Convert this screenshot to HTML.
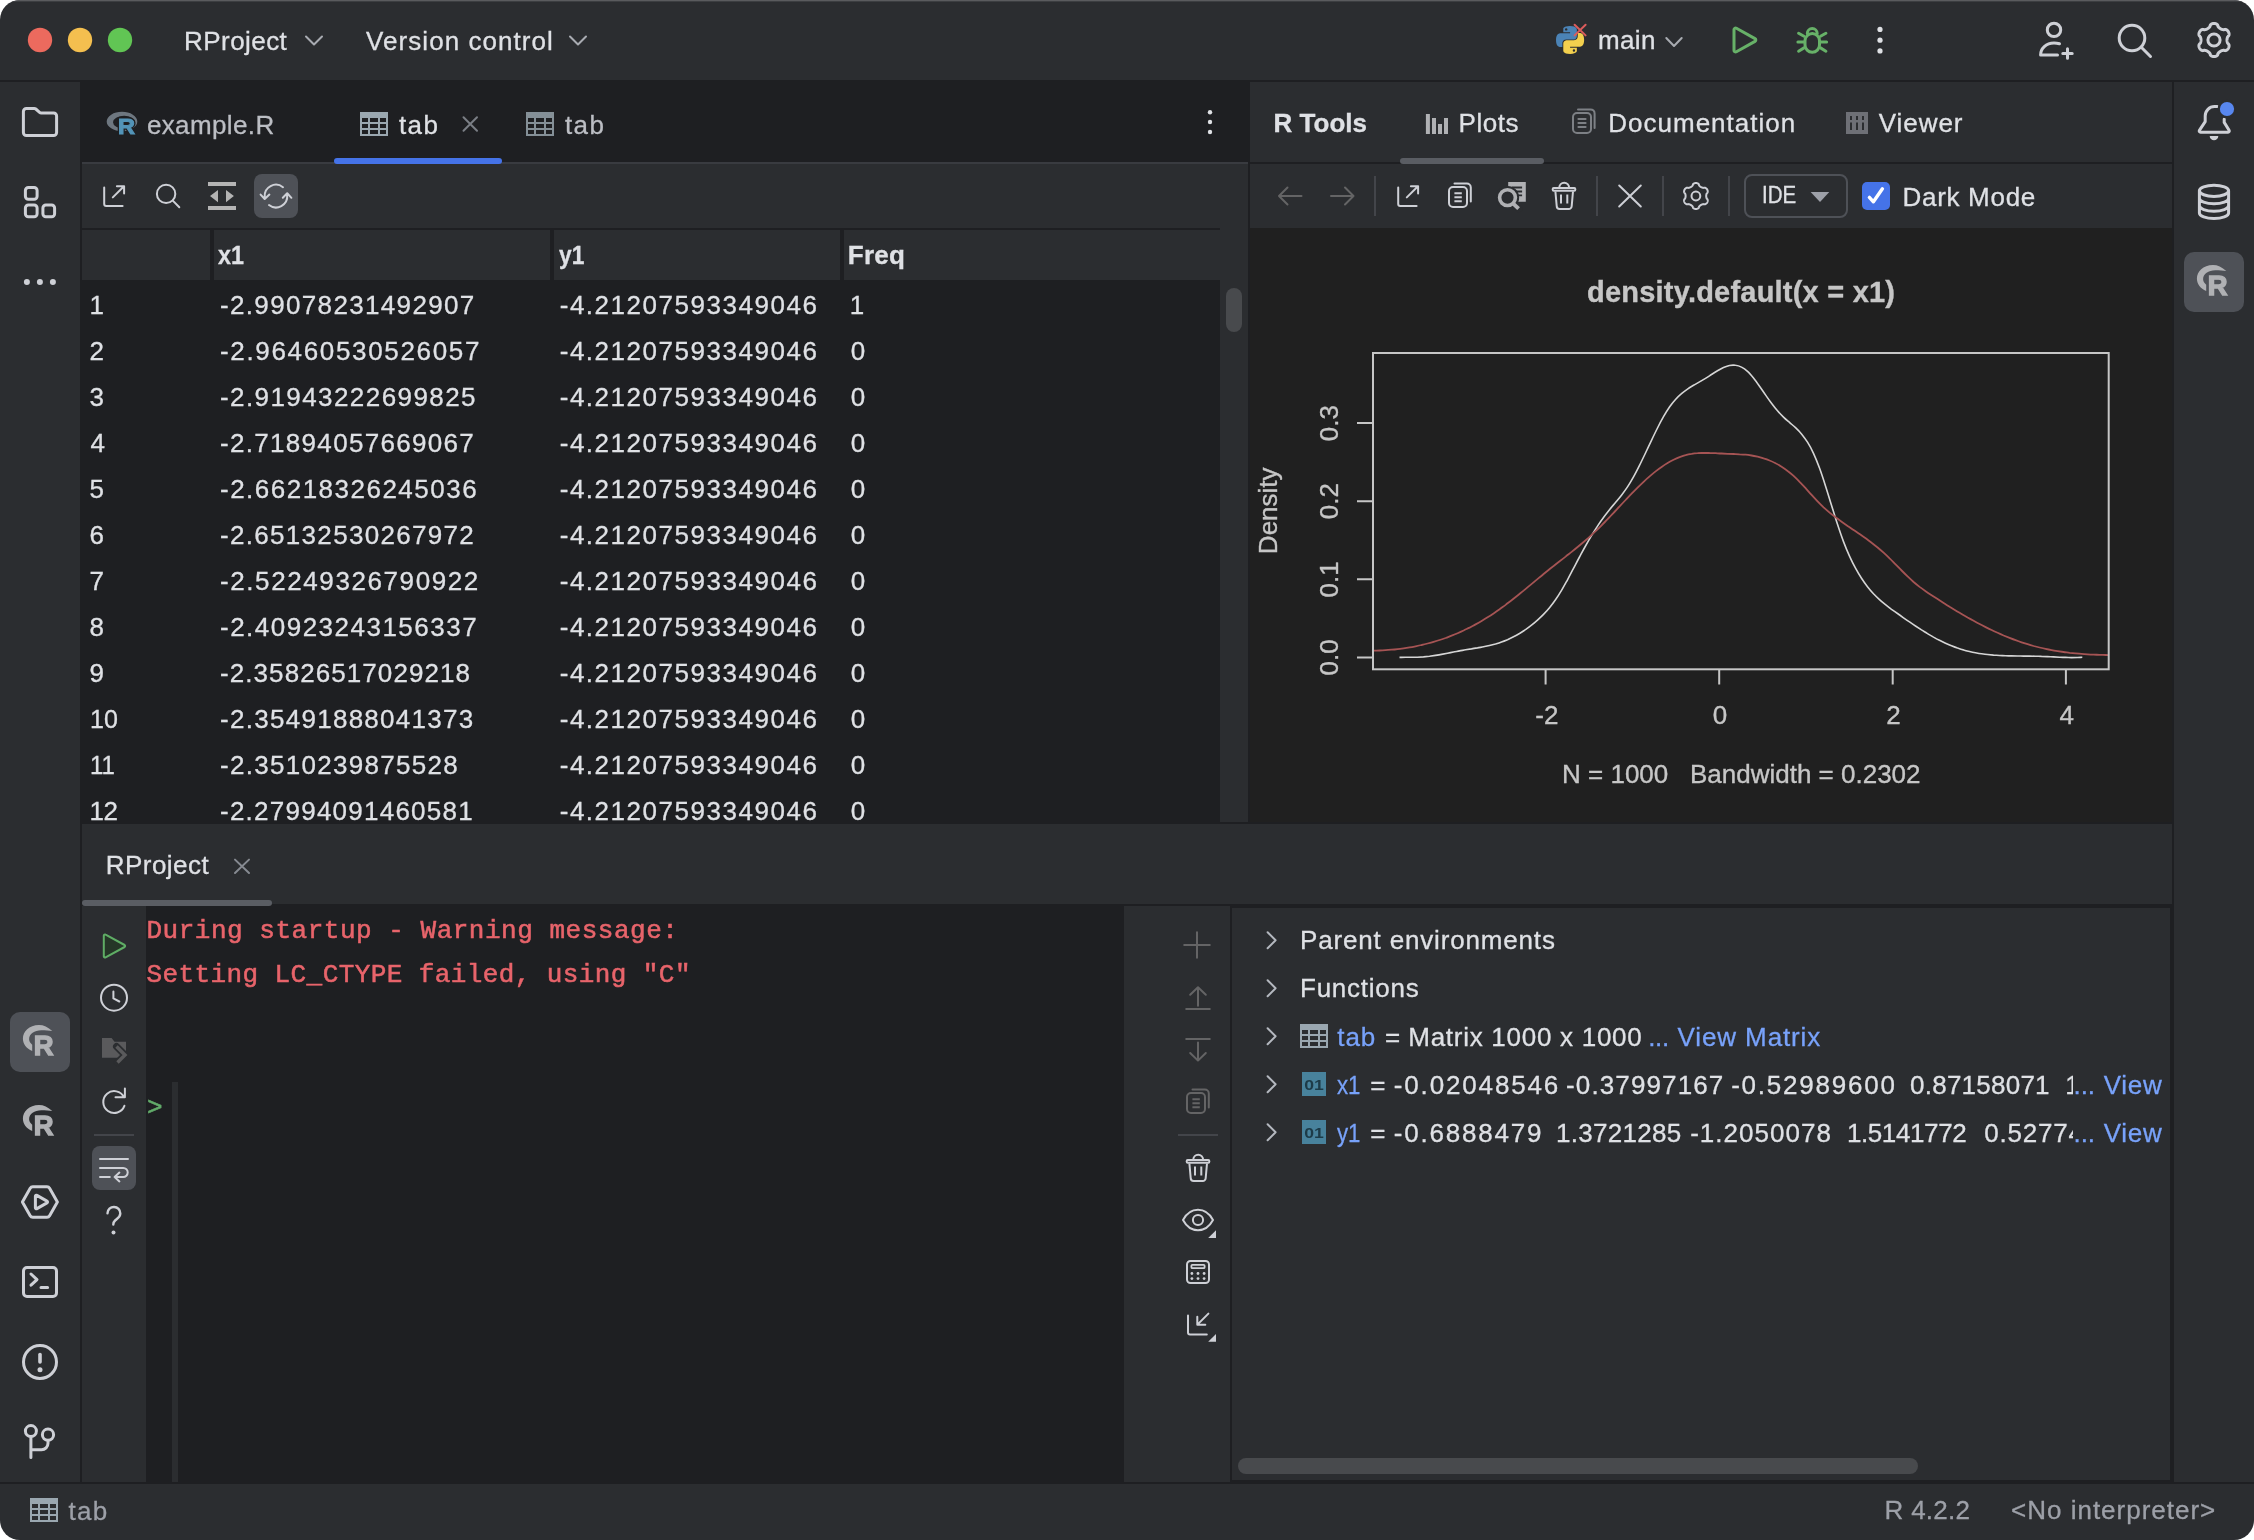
<!DOCTYPE html>
<html><head><meta charset='utf-8'><title>RProject</title><style>html,body{margin:0;padding:0;background:#fff}
#app{position:relative;width:2254px;height:1540px;overflow:hidden;border-radius:20px;background:#2b2d30;font-family:'Liberation Sans',sans-serif;font-size:26px;color:#dfe1e5}
#app div,#app span,#app svg{position:absolute;display:block}
#app span{white-space:pre;line-height:1;-webkit-text-stroke:0.3px}
#app .gl{left:0;top:0;width:2254px;height:1540px;will-change:transform}
#app svg{overflow:visible}</style></head><body><div id='app'><div class='gl'>
<div style="left:0px;top:0px;width:2254px;height:1px;background:#5a5b5e;"></div>
<div style="left:0px;top:1px;width:2254px;height:1px;background:#3c3e41;"></div>
<div style="left:0px;top:80px;width:2254px;height:2px;background:#1e1f22;"></div>
<div style="left:80px;top:82px;width:2px;height:1400px;background:#1e1f22;"></div>
<div style="left:2172px;top:82px;width:2px;height:1400px;background:#1e1f22;"></div>
<div style="left:82px;top:82px;width:1166px;height:80px;background:#1e1f22;"></div>
<div style="left:82px;top:162px;width:1166px;height:2px;background:#393b40;"></div>
<div style="left:334px;top:158px;width:168px;height:6px;background:#4573e8;border-radius:3px"></div>
<div style="left:82px;top:228px;width:1138px;height:2px;background:#1e1f22;"></div>
<div style="left:254px;top:174px;width:44px;height:44px;background:#4e5157;border-radius:8px"></div>
<div style="left:210px;top:230px;width:4px;height:50px;background:#1e1f22;"></div>
<div style="left:550px;top:230px;width:4px;height:50px;background:#1e1f22;"></div>
<div style="left:840px;top:230px;width:4px;height:50px;background:#1e1f22;"></div>
<div style="left:82px;top:280px;width:1138px;height:544px;background:#1e1f22;"></div>
<div style="left:1226px;top:288px;width:16px;height:44px;background:#484a4d;border-radius:8px"></div>
<div style="left:1248px;top:82px;width:2px;height:742px;background:#1e1f22;"></div>
<div style="left:1250px;top:162px;width:922px;height:2px;background:#1e1f22;"></div>
<div style="left:1400px;top:158px;width:144px;height:6px;background:#5a5d63;border-radius:3px"></div>
<div style="left:1250px;top:228px;width:922px;height:594px;background:#202020;"></div>
<div style="left:82px;top:822px;width:2090px;height:2px;background:#1e1f22;"></div>
<div style="left:82px;top:904px;width:2090px;height:2px;background:#1e1f22;"></div>
<div style="left:82px;top:900px;width:190px;height:6px;background:#5a5d63;border-radius:3px"></div>
<div style="left:146px;top:906px;width:978px;height:576px;background:#1e1f22;"></div>
<div style="left:172px;top:1082px;width:6px;height:400px;background:#2b2d30;"></div>
<div style="left:1230px;top:906px;width:2px;height:576px;background:#1e1f22;"></div>
<div style="left:1232px;top:906px;width:938px;height:2px;background:#1e1f22;"></div>
<div style="left:2170px;top:906px;width:2px;height:576px;background:#1e1f22;"></div>
<div style="left:1238px;top:1458px;width:680px;height:16px;background:#484a4d;border-radius:8px"></div>
<div style="left:94px;top:1134px;width:40px;height:2px;background:#43454a;"></div>
<div style="left:92px;top:1146px;width:44px;height:44px;background:#4e5157;border-radius:8px"></div>
<div style="left:1178px;top:1134px;width:40px;height:2px;background:#43454a;"></div>
<div style="left:0px;top:1482px;width:2254px;height:2px;background:#1e1f22;"></div>
<div style="left:1232px;top:1480px;width:938px;height:2px;background:#1e1f22;"></div>
<div style="left:10px;top:1012px;width:60px;height:60px;background:#4e5157;border-radius:10px"></div>
<div style="left:2184px;top:252px;width:60px;height:60px;background:#4e5157;border-radius:10px"></div>
<div style="left:1374px;top:176px;width:2px;height:40px;background:#43454a;"></div>
<div style="left:1596px;top:176px;width:2px;height:40px;background:#43454a;"></div>
<div style="left:1662px;top:176px;width:2px;height:40px;background:#43454a;"></div>
<div style="left:1728px;top:176px;width:2px;height:40px;background:#43454a;"></div>
<div style="left:1744px;top:173.8px;width:104px;height:44.4px;background:transparent;border:2px solid #4e5157;border-radius:8px;box-sizing:border-box"></div>
<div style="left:1862px;top:182px;width:28px;height:28px;background:#4573e8;border-radius:5px"></div>
<span style="left:184.1px;top:28.09px;font-size:26px;color:#dfe1e5;letter-spacing:0.429px;">RProject</span>
<span style="left:366.1px;top:28.09px;font-size:26px;color:#dfe1e5;letter-spacing:1.05px;">Version control</span>
<span style="left:1598.0px;top:27.29px;font-size:26px;color:#dfe1e5;letter-spacing:0.333px;">main</span>
<span style="left:146.9px;top:111.59px;font-size:26px;color:#bcbec4;letter-spacing:0.387px;">example.R</span>
<span style="left:399.0px;top:111.59px;font-size:26px;color:#dfe1e5;letter-spacing:1.35px;">tab</span>
<span style="left:565.0px;top:111.59px;font-size:26px;color:#bcbec4;letter-spacing:1.35px;">tab</span>
<span style="left:218.4px;top:241.59px;font-size:26px;color:#dfe1e5;font-weight:700;transform:scaleX(0.8966);transform-origin:0 0;">x1</span>
<span style="left:558.7px;top:241.59px;font-size:26px;color:#dfe1e5;font-weight:700;transform:scaleX(0.8759);transform-origin:0 0;">y1</span>
<span style="left:847.8px;top:241.59px;font-size:26px;color:#dfe1e5;font-weight:700;letter-spacing:0.267px;">Freq</span>
<span style="left:89.6px;top:291.59px;font-size:26px;color:#dfe1e5;">1</span>
<span style="left:220.0px;top:291.59px;font-size:26px;color:#dfe1e5;letter-spacing:1.344px;">-2.99078231492907</span>
<span style="left:559.7px;top:291.59px;font-size:26px;color:#dfe1e5;letter-spacing:1.531px;">-4.21207593349046</span>
<span style="left:849.7px;top:291.59px;font-size:26px;color:#dfe1e5;">1</span>
<span style="left:89.6px;top:337.59px;font-size:26px;color:#dfe1e5;">2</span>
<span style="left:220.0px;top:337.59px;font-size:26px;color:#dfe1e5;letter-spacing:1.663px;">-2.96460530526057</span>
<span style="left:559.7px;top:337.59px;font-size:26px;color:#dfe1e5;letter-spacing:1.531px;">-4.21207593349046</span>
<span style="left:850.7px;top:337.59px;font-size:26px;color:#dfe1e5;">0</span>
<span style="left:89.6px;top:383.59px;font-size:26px;color:#dfe1e5;">3</span>
<span style="left:220.0px;top:383.59px;font-size:26px;color:#dfe1e5;letter-spacing:1.419px;">-2.91943222699825</span>
<span style="left:559.7px;top:383.59px;font-size:26px;color:#dfe1e5;letter-spacing:1.531px;">-4.21207593349046</span>
<span style="left:850.7px;top:383.59px;font-size:26px;color:#dfe1e5;">0</span>
<span style="left:90.6px;top:429.59px;font-size:26px;color:#dfe1e5;">4</span>
<span style="left:220.0px;top:429.59px;font-size:26px;color:#dfe1e5;letter-spacing:1.312px;">-2.71894057669067</span>
<span style="left:559.7px;top:429.59px;font-size:26px;color:#dfe1e5;letter-spacing:1.531px;">-4.21207593349046</span>
<span style="left:850.7px;top:429.59px;font-size:26px;color:#dfe1e5;">0</span>
<span style="left:89.6px;top:475.59px;font-size:26px;color:#dfe1e5;">5</span>
<span style="left:220.0px;top:475.59px;font-size:26px;color:#dfe1e5;letter-spacing:1.488px;">-2.66218326245036</span>
<span style="left:559.7px;top:475.59px;font-size:26px;color:#dfe1e5;letter-spacing:1.531px;">-4.21207593349046</span>
<span style="left:850.7px;top:475.59px;font-size:26px;color:#dfe1e5;">0</span>
<span style="left:89.6px;top:521.59px;font-size:26px;color:#dfe1e5;">6</span>
<span style="left:220.0px;top:521.59px;font-size:26px;color:#dfe1e5;letter-spacing:1.312px;">-2.65132530267972</span>
<span style="left:559.7px;top:521.59px;font-size:26px;color:#dfe1e5;letter-spacing:1.531px;">-4.21207593349046</span>
<span style="left:850.7px;top:521.59px;font-size:26px;color:#dfe1e5;">0</span>
<span style="left:89.6px;top:567.59px;font-size:26px;color:#dfe1e5;">7</span>
<span style="left:220.0px;top:567.59px;font-size:26px;color:#dfe1e5;letter-spacing:1.594px;">-2.52249326790922</span>
<span style="left:559.7px;top:567.59px;font-size:26px;color:#dfe1e5;letter-spacing:1.531px;">-4.21207593349046</span>
<span style="left:850.7px;top:567.59px;font-size:26px;color:#dfe1e5;">0</span>
<span style="left:89.6px;top:613.59px;font-size:26px;color:#dfe1e5;">8</span>
<span style="left:220.0px;top:613.59px;font-size:26px;color:#dfe1e5;letter-spacing:1.488px;">-2.40923243156337</span>
<span style="left:559.7px;top:613.59px;font-size:26px;color:#dfe1e5;letter-spacing:1.531px;">-4.21207593349046</span>
<span style="left:850.7px;top:613.59px;font-size:26px;color:#dfe1e5;">0</span>
<span style="left:89.6px;top:659.59px;font-size:26px;color:#dfe1e5;">9</span>
<span style="left:220.0px;top:659.59px;font-size:26px;color:#dfe1e5;letter-spacing:1.075px;">-2.35826517029218</span>
<span style="left:559.7px;top:659.59px;font-size:26px;color:#dfe1e5;letter-spacing:1.531px;">-4.21207593349046</span>
<span style="left:850.7px;top:659.59px;font-size:26px;color:#dfe1e5;">0</span>
<span style="left:89.64px;top:705.59px;font-size:26px;color:#dfe1e5;transform:scaleX(0.9643);transform-origin:0 0;">10</span>
<span style="left:220.0px;top:705.59px;font-size:26px;color:#dfe1e5;letter-spacing:1.281px;">-2.35491888041373</span>
<span style="left:559.7px;top:705.59px;font-size:26px;color:#dfe1e5;letter-spacing:1.531px;">-4.21207593349046</span>
<span style="left:850.7px;top:705.59px;font-size:26px;color:#dfe1e5;">0</span>
<span style="left:89.68px;top:751.59px;font-size:26px;color:#dfe1e5;transform:scaleX(0.924);transform-origin:0 0;">11</span>
<span style="left:220.0px;top:751.59px;font-size:26px;color:#dfe1e5;letter-spacing:1.3px;">-2.3510239875528</span>
<span style="left:559.7px;top:751.59px;font-size:26px;color:#dfe1e5;letter-spacing:1.531px;">-4.21207593349046</span>
<span style="left:850.7px;top:751.59px;font-size:26px;color:#dfe1e5;">0</span>
<span style="left:89.6px;top:797.59px;font-size:26px;color:#dfe1e5;letter-spacing:-0.6px;">12</span>
<span style="left:220.0px;top:797.59px;font-size:26px;color:#dfe1e5;letter-spacing:1.244px;">-2.27994091460581</span>
<span style="left:559.7px;top:797.59px;font-size:26px;color:#dfe1e5;letter-spacing:1.531px;">-4.21207593349046</span>
<span style="left:850.7px;top:797.59px;font-size:26px;color:#dfe1e5;">0</span>
<span style="left:1273.5px;top:109.59px;font-size:26px;color:#dfe1e5;font-weight:700;letter-spacing:0.017px;">R Tools</span>
<span style="left:1458.5px;top:109.59px;font-size:26px;color:#dfe1e5;letter-spacing:0.575px;">Plots</span>
<span style="left:1608.3px;top:109.59px;font-size:26px;color:#dfe1e5;letter-spacing:1.0px;">Documentation</span>
<span style="left:1878.8px;top:109.59px;font-size:26px;color:#dfe1e5;letter-spacing:0.94px;">Viewer</span>
<span style="left:1762.31px;top:184.23px;font-size:23px;color:#dfe1e5;transform:scaleX(0.8919);transform-origin:0 0;">IDE</span>
<span style="left:1902.5px;top:183.59px;font-size:26px;color:#dfe1e5;letter-spacing:0.7px;">Dark Mode</span>
<span style="left:105.8px;top:851.59px;font-size:26px;color:#dfe1e5;letter-spacing:0.457px;">RProject</span>
<span style="left:146.5px;top:917.67px;font-size:26px;color:#e8646b;font-family:'Liberation Mono',monospace;-webkit-text-stroke:0.55px;letter-spacing:0.516px;">During startup - Warning message:</span>
<span style="left:146.5px;top:961.67px;font-size:26px;color:#e8646b;font-family:'Liberation Mono',monospace;-webkit-text-stroke:0.55px;letter-spacing:0.409px;">Setting LC_CTYPE failed, using "C"</span>
<span style="left:147.0px;top:1095.27px;font-size:26px;color:#62ac6a;font-family:'Liberation Mono',monospace;-webkit-text-stroke:0.55px;">&gt;</span>
<span style="left:1300.0px;top:927.19px;font-size:26px;color:#dfe1e5;letter-spacing:0.833px;">Parent environments</span>
<span style="left:1300.0px;top:975.29px;font-size:26px;color:#dfe1e5;letter-spacing:0.75px;">Functions</span>
<span style="left:1337.2px;top:1023.59px;font-size:26px;color:#78a2fa;letter-spacing:1.0px;">tab</span>
<span style="left:1385.1px;top:1023.59px;font-size:26px;color:#dfe1e5;">=</span>
<span style="left:1408.3px;top:1023.59px;font-size:26px;color:#dfe1e5;letter-spacing:0.724px;">Matrix 1000 x 1000</span>
<span style="left:1648.2px;top:1023.59px;font-size:26px;color:#78a2fa;letter-spacing:-0.3px;">...</span>
<span style="left:1677.6px;top:1023.59px;font-size:26px;color:#78a2fa;letter-spacing:0.88px;">View Matrix</span>
<span style="left:1337.2px;top:1071.59px;font-size:26px;color:#78a2fa;transform:scaleX(0.8556);transform-origin:0 0;">x1</span>
<span style="left:1370.2px;top:1071.59px;font-size:26px;color:#dfe1e5;">=</span>
<span style="left:1337.2px;top:1119.59px;font-size:26px;color:#78a2fa;transform:scaleX(0.8556);transform-origin:0 0;">y1</span>
<span style="left:1370.2px;top:1119.59px;font-size:26px;color:#dfe1e5;">=</span>
<span style="left:68.6px;top:1497.59px;font-size:26px;color:#9da0a8;letter-spacing:1.25px;">tab</span>
<span style="left:1884.6px;top:1497.19px;font-size:26px;color:#9da0a8;letter-spacing:0.267px;">R 4.2.2</span>
<span style="left:2011.1px;top:1497.19px;font-size:26px;color:#9da0a8;letter-spacing:0.987px;">&lt;No interpreter&gt;</span>
<span style="left:1393.8px;top:1071.59px;font-size:26px;color:#dfe1e5;letter-spacing:1.85px;">-0.02048546</span>
<span style="left:1566.0px;top:1071.59px;font-size:26px;color:#dfe1e5;letter-spacing:1.13px;">-0.37997167</span>
<span style="left:1731.2px;top:1071.59px;font-size:26px;color:#dfe1e5;letter-spacing:1.77px;">-0.52989600</span>
<span style="left:1910.0px;top:1071.59px;font-size:26px;color:#dfe1e5;letter-spacing:0.244px;">0.87158071</span>
<span style="left:2065.3px;top:1071.59px;font-size:26px;color:#dfe1e5;letter-spacing:1.3px;">1.27</span>
<span style="left:1393.8px;top:1119.59px;font-size:26px;color:#dfe1e5;letter-spacing:1.789px;">-0.6888479</span>
<span style="left:1556.0px;top:1119.59px;font-size:26px;color:#dfe1e5;letter-spacing:0.287px;">1.3721285</span>
<span style="left:1690.2px;top:1119.59px;font-size:26px;color:#dfe1e5;letter-spacing:1.022px;">-1.2050078</span>
<span style="left:1846.9px;top:1119.59px;font-size:26px;color:#dfe1e5;letter-spacing:-0.388px;">1.5141772</span>
<span style="left:1984.3px;top:1119.59px;font-size:26px;color:#dfe1e5;letter-spacing:0.783px;">0.52774</span>
<div style="left:2072.7px;top:1064px;width:96px;height:90px;background:#2b2d30;"></div>
<span style="left:2073.5px;top:1071.59px;font-size:26px;color:#78a2fa;letter-spacing:-0.05px;">...</span>
<span style="left:2103.7px;top:1071.59px;font-size:26px;color:#78a2fa;letter-spacing:0.767px;">View</span>
<span style="left:2073.5px;top:1119.59px;font-size:26px;color:#78a2fa;letter-spacing:-0.05px;">...</span>
<span style="left:2103.7px;top:1119.59px;font-size:26px;color:#78a2fa;letter-spacing:0.767px;">View</span>
<svg style="left:0;top:0" width="2254" height="1540" viewBox="0 0 2254 1540" fill="none"><path d="M1399.5 657.4 C1400.5 657.4 1403.5 657.3 1405.5 657.3 C1407.5 657.3 1409.5 657.3 1411.5 657.3 C1413.5 657.3 1415.5 657.2 1417.5 657.2 C1419.5 657.1 1421.5 657.0 1423.5 656.9 C1425.5 656.7 1427.5 656.5 1429.5 656.3 C1431.5 656.0 1433.5 655.7 1435.5 655.4 C1437.5 655.1 1439.5 654.8 1441.5 654.4 C1443.5 654.0 1445.5 653.6 1447.5 653.2 C1449.5 652.8 1451.5 652.4 1453.5 652.0 C1455.5 651.6 1457.5 651.3 1459.5 650.9 C1461.5 650.5 1463.5 650.2 1465.5 649.8 C1467.5 649.5 1469.5 649.2 1471.5 648.9 C1473.5 648.5 1475.5 648.2 1477.5 647.9 C1479.5 647.5 1481.5 647.2 1483.5 646.8 C1485.5 646.4 1487.5 646.0 1489.5 645.5 C1491.5 645.0 1493.5 644.5 1495.5 644.0 C1497.5 643.4 1499.5 642.8 1501.5 642.0 C1503.5 641.3 1505.5 640.5 1507.5 639.7 C1509.5 638.8 1511.5 637.8 1513.5 636.8 C1515.5 635.8 1517.5 634.7 1519.5 633.5 C1521.5 632.2 1523.5 631.0 1525.5 629.6 C1527.5 628.2 1529.5 626.7 1531.5 625.1 C1533.5 623.6 1535.5 621.9 1537.5 620.1 C1539.5 618.3 1541.5 616.5 1543.5 614.4 C1545.5 612.3 1547.5 610.2 1549.5 607.7 C1551.5 605.3 1553.5 602.7 1555.5 599.8 C1557.5 596.9 1559.5 593.8 1561.5 590.4 C1563.5 587.1 1565.5 583.4 1567.5 579.8 C1569.5 576.1 1571.5 572.2 1573.5 568.4 C1575.5 564.6 1577.5 560.7 1579.5 557.0 C1581.5 553.3 1583.5 549.5 1585.5 546.0 C1587.5 542.4 1589.5 538.9 1591.5 535.6 C1593.5 532.3 1595.5 529.1 1597.5 526.1 C1599.5 523.1 1601.5 520.2 1603.5 517.5 C1605.5 514.7 1607.5 512.2 1609.5 509.7 C1611.5 507.2 1613.5 504.9 1615.5 502.5 C1617.5 500.1 1619.5 497.8 1621.5 495.2 C1623.5 492.6 1625.5 489.9 1627.5 486.9 C1629.5 483.9 1631.5 480.5 1633.5 476.9 C1635.5 473.4 1637.5 469.4 1639.5 465.4 C1641.5 461.4 1643.5 457.2 1645.5 453.0 C1647.5 448.8 1649.5 444.5 1651.5 440.3 C1653.5 436.1 1655.5 431.9 1657.5 428.0 C1659.5 424.0 1661.5 420.2 1663.5 416.7 C1665.5 413.2 1667.5 409.9 1669.5 407.0 C1671.5 404.2 1673.5 401.7 1675.5 399.5 C1677.5 397.3 1679.5 395.4 1681.5 393.7 C1683.5 391.9 1685.5 390.5 1687.5 389.1 C1689.5 387.7 1691.5 386.5 1693.5 385.3 C1695.5 384.1 1697.5 383.1 1699.5 381.9 C1701.5 380.8 1703.5 379.6 1705.5 378.4 C1707.5 377.2 1709.5 375.8 1711.5 374.5 C1713.5 373.2 1715.5 371.9 1717.5 370.7 C1719.5 369.5 1721.5 368.4 1723.5 367.5 C1725.5 366.7 1727.5 365.9 1729.5 365.5 C1731.5 365.1 1733.5 365.0 1735.5 365.3 C1737.5 365.5 1739.5 366.1 1741.5 367.1 C1743.5 368.1 1745.5 369.5 1747.5 371.3 C1749.5 373.1 1751.5 375.5 1753.5 377.9 C1755.5 380.4 1757.5 383.3 1759.5 386.2 C1761.5 389.0 1763.5 392.1 1765.5 394.9 C1767.5 397.8 1769.5 400.7 1771.5 403.3 C1773.5 406.0 1775.5 408.5 1777.5 410.8 C1779.5 413.2 1781.5 415.2 1783.5 417.1 C1785.5 419.1 1787.5 420.7 1789.5 422.4 C1791.5 424.2 1793.5 425.8 1795.5 427.7 C1797.5 429.6 1799.5 431.5 1801.5 433.9 C1803.5 436.4 1805.5 438.9 1807.5 442.2 C1809.5 445.4 1811.5 449.0 1813.5 453.3 C1815.5 457.6 1817.5 462.6 1819.5 468.1 C1821.5 473.5 1823.5 479.7 1825.5 485.9 C1827.5 492.1 1829.5 498.8 1831.5 505.2 C1833.5 511.6 1835.5 518.3 1837.5 524.3 C1839.5 530.4 1841.5 536.3 1843.5 541.6 C1845.5 546.9 1847.5 551.7 1849.5 556.1 C1851.5 560.5 1853.5 564.5 1855.5 568.2 C1857.5 571.9 1859.5 575.2 1861.5 578.3 C1863.5 581.4 1865.5 584.2 1867.5 586.7 C1869.5 589.3 1871.5 591.6 1873.5 593.8 C1875.5 595.9 1877.5 597.8 1879.5 599.6 C1881.5 601.5 1883.5 603.1 1885.5 604.7 C1887.5 606.3 1889.5 607.8 1891.5 609.3 C1893.5 610.7 1895.5 612.1 1897.5 613.5 C1899.5 615.0 1901.5 616.4 1903.5 617.8 C1905.5 619.2 1907.5 620.6 1909.5 621.9 C1911.5 623.3 1913.5 624.7 1915.5 626.0 C1917.5 627.3 1919.5 628.6 1921.5 629.9 C1923.5 631.1 1925.5 632.4 1927.5 633.6 C1929.5 634.8 1931.5 635.9 1933.5 637.1 C1935.5 638.2 1937.5 639.3 1939.5 640.3 C1941.5 641.3 1943.5 642.3 1945.5 643.2 C1947.5 644.1 1949.5 645.0 1951.5 645.8 C1953.5 646.6 1955.5 647.4 1957.5 648.1 C1959.5 648.7 1961.5 649.4 1963.5 649.9 C1965.5 650.5 1967.5 651.0 1969.5 651.5 C1971.5 652.0 1973.5 652.4 1975.5 652.7 C1977.5 653.1 1979.5 653.5 1981.5 653.7 C1983.5 654.0 1985.5 654.3 1987.5 654.5 C1989.5 654.7 1991.5 654.9 1993.5 655.1 C1995.5 655.2 1997.5 655.4 1999.5 655.5 C2001.5 655.6 2003.5 655.7 2005.5 655.8 C2007.5 655.8 2009.5 655.9 2011.5 655.9 C2013.5 656.0 2015.5 656.0 2017.5 656.0 C2019.5 656.0 2021.5 656.1 2023.5 656.1 C2025.5 656.1 2027.5 656.1 2029.5 656.1 C2031.5 656.2 2033.5 656.2 2035.5 656.2 C2037.5 656.3 2039.5 656.3 2041.5 656.4 C2043.5 656.4 2045.5 656.5 2047.5 656.6 C2049.5 656.7 2051.5 656.8 2053.5 656.9 C2055.5 657.0 2057.5 657.1 2059.5 657.2 C2061.5 657.3 2063.5 657.4 2065.5 657.4 C2067.5 657.5 2069.5 657.5 2071.5 657.6 C2073.5 657.6 2075.7 657.6 2077.5 657.5 C2079.3 657.5 2081.5 657.3 2082.3 657.3" stroke="#d6d6d6" stroke-width="1.6" fill="none"/>
<path d="M1373.6 650.7 C1374.6 650.6 1377.6 650.6 1379.6 650.5 C1381.6 650.4 1383.6 650.3 1385.6 650.2 C1387.6 650.1 1389.6 649.9 1391.6 649.7 C1393.6 649.6 1395.6 649.4 1397.6 649.1 C1399.6 648.9 1401.6 648.6 1403.6 648.3 C1405.6 648.1 1407.6 647.8 1409.6 647.4 C1411.6 647.1 1413.6 646.7 1415.6 646.3 C1417.6 645.9 1419.6 645.5 1421.6 645.0 C1423.6 644.6 1425.6 644.1 1427.6 643.5 C1429.6 643.0 1431.6 642.5 1433.6 641.9 C1435.6 641.3 1437.6 640.7 1439.6 640.0 C1441.6 639.4 1443.6 638.7 1445.6 638.0 C1447.6 637.2 1449.6 636.5 1451.6 635.7 C1453.6 634.9 1455.6 634.1 1457.6 633.2 C1459.6 632.3 1461.6 631.4 1463.6 630.5 C1465.6 629.5 1467.6 628.6 1469.6 627.6 C1471.6 626.5 1473.6 625.5 1475.6 624.4 C1477.6 623.3 1479.6 622.2 1481.6 621.0 C1483.6 619.8 1485.6 618.6 1487.6 617.3 C1489.6 616.1 1491.6 614.8 1493.6 613.4 C1495.6 612.1 1497.6 610.7 1499.6 609.3 C1501.6 607.8 1503.6 606.4 1505.6 604.9 C1507.6 603.3 1509.6 601.8 1511.6 600.2 C1513.6 598.7 1515.6 597.1 1517.6 595.5 C1519.6 593.9 1521.6 592.2 1523.6 590.6 C1525.6 588.9 1527.6 587.3 1529.6 585.6 C1531.6 584.0 1533.6 582.3 1535.6 580.6 C1537.6 579.0 1539.6 577.3 1541.6 575.7 C1543.6 574.0 1545.6 572.4 1547.6 570.8 C1549.6 569.1 1551.6 567.5 1553.6 566.0 C1555.6 564.4 1557.6 562.8 1559.6 561.3 C1561.6 559.7 1563.6 558.1 1565.6 556.6 C1567.6 555.0 1569.6 553.5 1571.6 551.9 C1573.6 550.3 1575.6 548.7 1577.6 547.0 C1579.6 545.4 1581.6 543.7 1583.6 542.0 C1585.6 540.3 1587.6 538.6 1589.6 536.8 C1591.6 535.0 1593.6 533.1 1595.6 531.2 C1597.6 529.3 1599.6 527.3 1601.6 525.3 C1603.6 523.3 1605.6 521.2 1607.6 519.2 C1609.6 517.1 1611.6 514.9 1613.6 512.8 C1615.6 510.7 1617.6 508.5 1619.6 506.4 C1621.6 504.2 1623.6 502.1 1625.6 500.0 C1627.6 497.9 1629.6 495.7 1631.6 493.7 C1633.6 491.6 1635.6 489.6 1637.6 487.6 C1639.6 485.6 1641.6 483.7 1643.6 481.8 C1645.6 479.9 1647.6 478.1 1649.6 476.4 C1651.6 474.7 1653.6 473.0 1655.6 471.4 C1657.6 469.9 1659.6 468.4 1661.6 467.0 C1663.6 465.6 1665.6 464.3 1667.6 463.1 C1669.6 461.9 1671.6 460.8 1673.6 459.8 C1675.6 458.8 1677.6 457.9 1679.6 457.1 C1681.6 456.4 1683.6 455.7 1685.6 455.2 C1687.6 454.6 1689.6 454.2 1691.6 453.9 C1693.6 453.5 1695.6 453.3 1697.6 453.2 C1699.6 453.0 1701.6 453.0 1703.6 452.9 C1705.6 452.9 1707.6 452.9 1709.6 453.0 C1711.6 453.0 1713.6 453.1 1715.6 453.2 C1717.6 453.3 1719.6 453.5 1721.6 453.5 C1723.6 453.6 1725.6 453.7 1727.6 453.8 C1729.6 453.8 1731.6 453.9 1733.6 454.0 C1735.6 454.1 1737.6 454.1 1739.6 454.3 C1741.6 454.4 1743.6 454.5 1745.6 454.7 C1747.6 454.9 1749.6 455.2 1751.6 455.5 C1753.6 455.8 1755.6 456.2 1757.6 456.6 C1759.6 457.1 1761.6 457.6 1763.6 458.3 C1765.6 458.9 1767.6 459.6 1769.6 460.5 C1771.6 461.3 1773.6 462.2 1775.6 463.3 C1777.6 464.3 1779.6 465.5 1781.6 466.7 C1783.6 468.0 1785.6 469.4 1787.6 471.0 C1789.6 472.5 1791.6 474.1 1793.6 475.9 C1795.6 477.8 1797.6 479.7 1799.6 481.8 C1801.6 483.8 1803.6 486.0 1805.6 488.2 C1807.6 490.4 1809.6 492.7 1811.6 494.9 C1813.6 497.1 1815.6 499.3 1817.6 501.4 C1819.6 503.5 1821.6 505.5 1823.6 507.4 C1825.6 509.2 1827.6 511.0 1829.6 512.6 C1831.6 514.3 1833.6 515.8 1835.6 517.3 C1837.6 518.8 1839.6 520.3 1841.6 521.7 C1843.6 523.1 1845.6 524.5 1847.6 525.9 C1849.6 527.3 1851.6 528.6 1853.6 530.0 C1855.6 531.4 1857.6 532.7 1859.6 534.1 C1861.6 535.5 1863.6 536.9 1865.6 538.3 C1867.6 539.8 1869.6 541.2 1871.6 542.8 C1873.6 544.3 1875.6 545.9 1877.6 547.5 C1879.6 549.2 1881.6 550.9 1883.6 552.7 C1885.6 554.5 1887.6 556.4 1889.6 558.4 C1891.6 560.3 1893.6 562.4 1895.6 564.4 C1897.6 566.4 1899.6 568.5 1901.6 570.5 C1903.6 572.5 1905.6 574.5 1907.6 576.4 C1909.6 578.3 1911.6 580.2 1913.6 582.0 C1915.6 583.7 1917.6 585.3 1919.6 586.9 C1921.6 588.4 1923.6 589.8 1925.6 591.2 C1927.6 592.6 1929.6 593.9 1931.6 595.2 C1933.6 596.5 1935.6 597.8 1937.6 599.1 C1939.6 600.4 1941.6 601.7 1943.6 603.0 C1945.6 604.3 1947.6 605.5 1949.6 606.8 C1951.6 608.0 1953.6 609.2 1955.6 610.4 C1957.6 611.7 1959.6 612.8 1961.6 614.0 C1963.6 615.2 1965.6 616.3 1967.6 617.5 C1969.6 618.6 1971.6 619.7 1973.6 620.8 C1975.6 621.9 1977.6 623.0 1979.6 624.0 C1981.6 625.1 1983.6 626.1 1985.6 627.1 C1987.6 628.1 1989.6 629.1 1991.6 630.0 C1993.6 631.0 1995.6 631.9 1997.6 632.8 C1999.6 633.7 2001.6 634.6 2003.6 635.5 C2005.6 636.3 2007.6 637.1 2009.6 637.9 C2011.6 638.7 2013.6 639.5 2015.6 640.2 C2017.6 640.9 2019.6 641.6 2021.6 642.3 C2023.6 643.0 2025.6 643.6 2027.6 644.2 C2029.6 644.8 2031.6 645.4 2033.6 646.0 C2035.6 646.5 2037.6 647.0 2039.6 647.5 C2041.6 648.0 2043.6 648.5 2045.6 648.9 C2047.6 649.3 2049.6 649.7 2051.6 650.1 C2053.6 650.5 2055.6 650.8 2057.6 651.1 C2059.6 651.4 2061.6 651.7 2063.6 652.0 C2065.6 652.3 2067.6 652.5 2069.6 652.8 C2071.6 653.0 2073.6 653.2 2075.6 653.4 C2077.6 653.6 2079.6 653.8 2081.6 653.9 C2083.6 654.1 2085.6 654.2 2087.6 654.3 C2089.6 654.5 2091.6 654.6 2093.6 654.6 C2095.6 654.7 2097.6 654.8 2099.6 654.9 C2101.6 654.9 2104.1 655.0 2105.6 655.0 C2107.1 655.0 2108.0 655.0 2108.5 655.1" stroke="#a65454" stroke-width="1.8" fill="none"/>
<rect x="1373" y="353" width="735.7" height="316.3" stroke="#c6c6c6" stroke-width="2" fill="none"/>
<path d="M1357 657.4H1373M1357 579.3H1373M1357 501.2H1373M1357 423.1H1373M1545.6 669.3V684.5M1719.2 669.3V684.5M1892.7 669.3V684.5M2065.9 669.3V684.5" stroke="#c6c6c6" stroke-width="2" fill="none"/>
<text x="1546.8" y="723.5" font-family="Liberation Sans,sans-serif" stroke="#c6c6c6" stroke-width="0.35" font-size="26" fill="#c6c6c6" text-anchor="middle">-2</text>
<text x="1720.0" y="723.5" font-family="Liberation Sans,sans-serif" stroke="#c6c6c6" stroke-width="0.35" font-size="26" fill="#c6c6c6" text-anchor="middle">0</text>
<text x="1893.5" y="723.5" font-family="Liberation Sans,sans-serif" stroke="#c6c6c6" stroke-width="0.35" font-size="26" fill="#c6c6c6" text-anchor="middle">2</text>
<text x="2066.7000000000003" y="723.5" font-family="Liberation Sans,sans-serif" stroke="#c6c6c6" stroke-width="0.35" font-size="26" fill="#c6c6c6" text-anchor="middle">4</text>
<text transform="translate(1337.7 657.4) rotate(-90)" font-family="Liberation Sans,sans-serif" stroke="#c6c6c6" stroke-width="0.35" font-size="26" fill="#c6c6c6" text-anchor="middle">0.0</text>
<text transform="translate(1337.7 579.3) rotate(-90)" font-family="Liberation Sans,sans-serif" stroke="#c6c6c6" stroke-width="0.35" font-size="26" fill="#c6c6c6" text-anchor="middle">0.1</text>
<text transform="translate(1337.7 501.2) rotate(-90)" font-family="Liberation Sans,sans-serif" stroke="#c6c6c6" stroke-width="0.35" font-size="26" fill="#c6c6c6" text-anchor="middle">0.2</text>
<text transform="translate(1337.7 423.1) rotate(-90)" font-family="Liberation Sans,sans-serif" stroke="#c6c6c6" stroke-width="0.35" font-size="26" fill="#c6c6c6" text-anchor="middle">0.3</text>
<text transform="translate(1277.3 510.8) rotate(-90)" font-family="Liberation Sans,sans-serif" stroke="#c6c6c6" stroke-width="0.35" font-size="26" fill="#c6c6c6" text-anchor="middle">Density</text>
<text x="1741" y="302" font-family="Liberation Sans,sans-serif" stroke="#c6c6c6" stroke-width="0.35" font-size="29" font-weight="700" fill="#c6c6c6" text-anchor="middle" textLength="308" lengthAdjust="spacing">density.default(x = x1)</text>
<text x="1741.3" y="783" font-family="Liberation Sans,sans-serif" stroke="#c6c6c6" stroke-width="0.35" font-size="26" fill="#c6c6c6" text-anchor="middle" textLength="358.5" lengthAdjust="spacing" xml:space="preserve">N = 1000   Bandwidth = 0.2302</text></svg>
<svg style="left:0;top:0" width="2254" height="1540" viewBox="0 0 2254 1540" fill="none"><circle cx="40" cy="40" r="12.2" fill="#ec6a5e"/>
<circle cx="80" cy="40" r="12.2" fill="#f4bf4f"/>
<circle cx="120" cy="40" r="12.2" fill="#61c554"/>
<path d="M306 36.5 L314.0 44.5 L322 36.5" stroke="#a8abb1" stroke-width="2" fill="none" stroke-linecap="round" stroke-linejoin="round" />
<path d="M570 36.5 L578.0 44.5 L586 36.5" stroke="#a8abb1" stroke-width="2" fill="none" stroke-linecap="round" stroke-linejoin="round" />
<path d="M1666.3 38 L1674.0 46 L1681.7 38" stroke="#a8abb1" stroke-width="2" fill="none" stroke-linecap="round" stroke-linejoin="round" />
<g transform="translate(1556 26) scale(0.2545)"><path d="M54.9 0C26.8 0 28.6 12.2 28.6 12.2l.03 12.6h26.8v3.8H18S0 26.5 0 54.9s15.7 27.4 15.7 27.4h9.4V69.1s-.5-15.7 15.4-15.7h26.6s14.9.2 14.9-14.4V14.8S84.3 0 54.9 0zM40.1 8.5a4.8 4.8 0 110 9.6 4.8 4.8 0 010-9.6z" fill="#4b83b6" fill-rule="evenodd"/><path d="M55.7 109.8c28.1 0 26.3-12.2 26.3-12.2l-.03-12.6H55.2v-3.8h37.4s18 2 18-26.3-15.7-27.4-15.7-27.4h-9.4v13.2s.5 15.7-15.4 15.7H43.5s-14.9-.2-14.9 14.4v24.1s-2.3 14.8 27.1 14.8zm14.8-8.5a4.8 4.8 0 110-9.6 4.8 4.8 0 010 9.6z" fill="#f3d04e" fill-rule="evenodd"/></g>
<path d="M1574.6 24.8 L1585.6 35.4 M1585.6 24.8 L1574.6 35.4" stroke="#db5c5c" stroke-width="2" fill="none" stroke-linecap="round" stroke-linejoin="round" />
<path d="M1734 29.6 V50.4 a1.6 1.6 0 0 0 2.4 1.4 L1755 41.4 a1.6 1.6 0 0 0 0 -2.8 L1736.4 28.2 a1.6 1.6 0 0 0 -2.4 1.4 Z" stroke="#67b168" stroke-width="3" fill="none" stroke-linecap="round" stroke-linejoin="round" />
<rect x="1805" y="33.6" width="14.5" height="18.6" rx="7.25" stroke="#67b168" stroke-width="3" fill="none"/>
<path d="M1807.3 33.5 a4.95 4.95 0 0 1 9.9 0" stroke="#67b168" stroke-width="3" fill="none" stroke-linecap="round" stroke-linejoin="round" />
<path d="M1798.6 33.2 L1804 36.3 M1825.9 33.2 L1820.5 36.3 M1797.9 42 H1804 M1826.6 42 H1820.5 M1798.6 51.2 L1804 47.9 M1825.9 51.2 L1820.5 47.9" stroke="#67b168" stroke-width="3" fill="none" stroke-linecap="round" stroke-linejoin="round" />
<circle cx="1880" cy="29.4" r="2.6" fill="#dfe1e5"/>
<circle cx="1880" cy="40.2" r="2.6" fill="#dfe1e5"/>
<circle cx="1880" cy="50.9" r="2.6" fill="#dfe1e5"/>
<circle cx="2054" cy="29.9" r="6.7" stroke="#ced0d6" stroke-width="3" fill="none"/>
<path d="M2059.5 43.8 C2057.8 43.3 2056 43 2054 43 C2046 43 2040.6 48.6 2040.6 54.9 H2057.5" stroke="#ced0d6" stroke-width="3" fill="none" stroke-linecap="round" stroke-linejoin="round" />
<path d="M2062.8 53.5 H2072.2 M2067.5 48.8 V58.2" stroke="#ced0d6" stroke-width="3" fill="none" stroke-linecap="round" stroke-linejoin="round" />
<circle cx="2132" cy="38" r="12.8" stroke="#ced0d6" stroke-width="3" fill="none"/>
<path d="M2141.3 47.3 L2150.5 56.5" stroke="#ced0d6" stroke-width="3" fill="none" stroke-linecap="round" stroke-linejoin="round" />
<path d="M2227.00 40.00 L2227.01 40.34 L2227.03 40.68 L2227.07 41.03 L2227.13 41.38 L2227.20 41.74 L2227.29 42.11 L2227.41 42.48 L2227.55 42.88 L2227.76 43.30 L2228.30 43.83 L2228.81 44.39 L2228.97 44.87 L2229.05 45.33 L2229.07 45.79 L2229.05 46.23 L2228.98 46.67 L2228.88 47.10 L2228.75 47.51 L2228.58 47.92 L2228.38 48.30 L2228.14 48.67 L2227.88 49.01 L2227.59 49.34 L2227.27 49.64 L2226.92 49.92 L2226.55 50.16 L2226.14 50.37 L2225.70 50.53 L2225.21 50.63 L2224.47 50.47 L2223.74 50.26 L2223.27 50.30 L2222.85 50.37 L2222.47 50.46 L2222.10 50.56 L2221.76 50.68 L2221.43 50.80 L2221.11 50.94 L2220.80 51.09 L2220.50 51.26 L2220.21 51.44 L2219.92 51.63 L2219.64 51.83 L2219.37 52.06 L2219.09 52.30 L2218.82 52.56 L2218.55 52.85 L2218.28 53.18 L2218.02 53.57 L2217.83 54.30 L2217.61 55.02 L2217.27 55.40 L2216.91 55.70 L2216.53 55.95 L2216.13 56.15 L2215.71 56.31 L2215.29 56.44 L2214.87 56.53 L2214.43 56.58 L2214.00 56.60 L2213.57 56.58 L2213.13 56.53 L2212.71 56.44 L2212.29 56.31 L2211.87 56.15 L2211.47 55.95 L2211.09 55.70 L2210.73 55.40 L2210.39 55.02 L2210.17 54.30 L2209.98 53.57 L2209.72 53.18 L2209.45 52.85 L2209.18 52.56 L2208.91 52.30 L2208.63 52.06 L2208.36 51.83 L2208.08 51.63 L2207.79 51.44 L2207.50 51.26 L2207.20 51.09 L2206.89 50.94 L2206.57 50.80 L2206.24 50.68 L2205.90 50.56 L2205.53 50.46 L2205.15 50.37 L2204.73 50.30 L2204.26 50.26 L2203.53 50.47 L2202.79 50.63 L2202.30 50.53 L2201.86 50.37 L2201.45 50.16 L2201.08 49.92 L2200.73 49.64 L2200.41 49.34 L2200.12 49.01 L2199.86 48.67 L2199.62 48.30 L2199.42 47.92 L2199.25 47.51 L2199.12 47.10 L2199.02 46.67 L2198.95 46.23 L2198.93 45.79 L2198.95 45.33 L2199.03 44.87 L2199.19 44.39 L2199.70 43.83 L2200.24 43.30 L2200.45 42.88 L2200.59 42.48 L2200.71 42.11 L2200.80 41.74 L2200.87 41.38 L2200.93 41.03 L2200.97 40.68 L2200.99 40.34 L2201.00 40.00 L2200.99 39.66 L2200.97 39.32 L2200.93 38.97 L2200.87 38.62 L2200.80 38.26 L2200.71 37.89 L2200.59 37.52 L2200.45 37.12 L2200.24 36.70 L2199.70 36.17 L2199.19 35.61 L2199.03 35.13 L2198.95 34.67 L2198.93 34.21 L2198.95 33.77 L2199.02 33.33 L2199.12 32.90 L2199.25 32.49 L2199.42 32.08 L2199.62 31.70 L2199.86 31.33 L2200.12 30.99 L2200.41 30.66 L2200.73 30.36 L2201.08 30.08 L2201.45 29.84 L2201.86 29.63 L2202.30 29.47 L2202.79 29.37 L2203.53 29.53 L2204.26 29.74 L2204.73 29.70 L2205.15 29.63 L2205.53 29.54 L2205.90 29.44 L2206.24 29.32 L2206.57 29.20 L2206.89 29.06 L2207.20 28.91 L2207.50 28.74 L2207.79 28.56 L2208.08 28.37 L2208.36 28.17 L2208.63 27.94 L2208.91 27.70 L2209.18 27.44 L2209.45 27.15 L2209.72 26.82 L2209.98 26.43 L2210.17 25.70 L2210.39 24.98 L2210.73 24.60 L2211.09 24.30 L2211.47 24.05 L2211.87 23.85 L2212.29 23.69 L2212.71 23.56 L2213.13 23.47 L2213.57 23.42 L2214.00 23.40 L2214.43 23.42 L2214.87 23.47 L2215.29 23.56 L2215.71 23.69 L2216.13 23.85 L2216.53 24.05 L2216.91 24.30 L2217.27 24.60 L2217.61 24.98 L2217.83 25.70 L2218.02 26.43 L2218.28 26.82 L2218.55 27.15 L2218.82 27.44 L2219.09 27.70 L2219.37 27.94 L2219.64 28.17 L2219.92 28.37 L2220.21 28.56 L2220.50 28.74 L2220.80 28.91 L2221.11 29.06 L2221.43 29.20 L2221.76 29.32 L2222.10 29.44 L2222.47 29.54 L2222.85 29.63 L2223.27 29.70 L2223.74 29.74 L2224.47 29.53 L2225.21 29.37 L2225.70 29.47 L2226.14 29.63 L2226.55 29.84 L2226.92 30.08 L2227.27 30.36 L2227.59 30.66 L2227.88 30.99 L2228.14 31.33 L2228.38 31.70 L2228.58 32.08 L2228.75 32.49 L2228.88 32.90 L2228.98 33.33 L2229.05 33.77 L2229.07 34.21 L2229.05 34.67 L2228.97 35.13 L2228.81 35.61 L2228.30 36.17 L2227.76 36.70 L2227.55 37.12 L2227.41 37.52 L2227.29 37.89 L2227.20 38.26 L2227.13 38.62 L2227.07 38.97 L2227.03 39.32 L2227.01 39.66 Z" stroke="#ced0d6" stroke-width="3" fill="none" stroke-linecap="round" stroke-linejoin="round" />
<circle cx="2214" cy="40" r="6.1" stroke="#ced0d6" stroke-width="3" fill="none"/>
<path d="M26.4 108.4 H34.2 a2.5 2.5 0 0 1 1.6 .6 L39.6 112.3 a2.5 2.5 0 0 0 1.6 .6 H53.6 a3 3 0 0 1 3 3 V132.6 a3 3 0 0 1 -3 3 H26.4 a3 3 0 0 1 -3 -3 V111.4 a3 3 0 0 1 3 -3 Z" stroke="#ced0d6" stroke-width="3" fill="none" stroke-linecap="round" stroke-linejoin="round" />
<rect x="25.4" y="187.5" width="11.7" height="11.7" rx="3" stroke="#ced0d6" stroke-width="3" fill="none"/>
<rect x="25.4" y="205" width="11.7" height="11.7" rx="3" stroke="#ced0d6" stroke-width="3" fill="none"/>
<rect x="42.9" y="205" width="11.7" height="11.7" rx="3" stroke="#ced0d6" stroke-width="3" fill="none"/>
<circle cx="26.9" cy="281.9" r="3" fill="#ced0d6"/>
<circle cx="39.9" cy="281.9" r="3" fill="#ced0d6"/>
<circle cx="52.9" cy="281.9" r="3" fill="#ced0d6"/>
<g transform="translate(10 1012)"><path d="M42.3 19.1 C38 14.8 33.5 12.9 29 12.9 C19 12.9 12.9 19.5 12.9 26.5 C12.9 32 16.5 36.5 22.2 39 L22.2 32.7 C20 30.8 19.1 29 19.1 27.3 C19.1 22 24.5 18.3 31.2 18.3 C35.5 18.3 39.5 18.6 42.3 19.1 Z" fill="#b0b1b4"/><text x="23.7" y="43.1" font-family="Liberation Sans,sans-serif" font-weight="700" font-size="27.4" fill="#b0b1b4" stroke="#b0b1b4" stroke-width="1.4" stroke-linejoin="miter">R</text></g>
<g transform="translate(10 1092)"><path d="M42.3 19.1 C38 14.8 33.5 12.9 29 12.9 C19 12.9 12.9 19.5 12.9 26.5 C12.9 32 16.5 36.5 22.2 39 L22.2 32.7 C20 30.8 19.1 29 19.1 27.3 C19.1 22 24.5 18.3 31.2 18.3 C35.5 18.3 39.5 18.6 42.3 19.1 Z" fill="#b0b1b4"/><text x="23.7" y="43.1" font-family="Liberation Sans,sans-serif" font-weight="700" font-size="27.4" fill="#b0b1b4" stroke="#b0b1b4" stroke-width="1.4" stroke-linejoin="miter">R</text></g>
<g transform="translate(2184 252)"><path d="M42.3 19.1 C38 14.8 33.5 12.9 29 12.9 C19 12.9 12.9 19.5 12.9 26.5 C12.9 32 16.5 36.5 22.2 39 L22.2 32.7 C20 30.8 19.1 29 19.1 27.3 C19.1 22 24.5 18.3 31.2 18.3 C35.5 18.3 39.5 18.6 42.3 19.1 Z" fill="#b0b1b4"/><text x="23.7" y="43.1" font-family="Liberation Sans,sans-serif" font-weight="700" font-size="27.4" fill="#b0b1b4" stroke="#b0b1b4" stroke-width="1.4" stroke-linejoin="miter">R</text></g>
<path d="M22.4 1202 L30.2 1188.3 a3 3 0 0 1 2.6 -1.5 H47 a3 3 0 0 1 2.6 1.5 L57.4 1202 L49.6 1215.7 a3 3 0 0 1 -2.6 1.5 H32.8 a3 3 0 0 1 -2.6 -1.5 Z" stroke="#ced0d6" stroke-width="3" fill="none" stroke-linecap="round" stroke-linejoin="round" />
<path d="M35.4 1196.3 V1207.7 a1 1 0 0 0 1.5 .9 L47 1202.9 a1 1 0 0 0 0 -1.8 L36.9 1195.4 a1 1 0 0 0 -1.5 .9 Z" stroke="#ced0d6" stroke-width="3" fill="none" stroke-linecap="round" stroke-linejoin="round" />
<rect x="23.5" y="1267.5" width="33" height="29" rx="3.5" stroke="#ced0d6" stroke-width="3" fill="none"/>
<path d="M31 1274 L37 1279.6 L31 1285.2 M41 1287.5 H47.6" stroke="#ced0d6" stroke-width="3" fill="none" stroke-linecap="round" stroke-linejoin="round" />
<circle cx="40" cy="1362" r="16.5" stroke="#ced0d6" stroke-width="3" fill="none"/>
<path d="M40 1354.5 V1362" stroke="#ced0d6" stroke-width="3.6" fill="none" stroke-linecap="round" stroke-linejoin="round" />
<circle cx="40" cy="1369.8" r="2.5" fill="#ced0d6"/>
<circle cx="30.9" cy="1431.1" r="5.5" stroke="#ced0d6" stroke-width="3" fill="none"/>
<circle cx="48" cy="1434.7" r="5.6" stroke="#ced0d6" stroke-width="3" fill="none"/>
<path d="M30.9 1436.8 V1457.6 M48 1440.5 V1443.3 a6.5 6.5 0 0 1 -6.5 6.5 H31" stroke="#ced0d6" stroke-width="3" fill="none" stroke-linecap="round" stroke-linejoin="round" />
<path d="M2217.3 106.6 H2214.5 a9.3 9.3 0 0 0 -9.3 9.3 V121.6 L2199.4 130.3 a1.3 1.3 0 0 0 1.1 2 H2228 a1.3 1.3 0 0 0 1.1 -2 L2224.2 122.4 V119" stroke="#ced0d6" stroke-width="3" fill="none" stroke-linecap="round" stroke-linejoin="round" />
<path d="M2209.7 136 H2218.3 a4.3 4.3 0 0 1 -8.6 0 Z" fill="#ced0d6" />
<circle cx="2227" cy="109" r="9.3" fill="#2b2d30"/>
<circle cx="2227" cy="109" r="7.1" fill="#5887ef"/>
<ellipse cx="2214" cy="190.8" rx="14.6" ry="5.6" stroke="#ced0d6" stroke-width="3"/>
<path d="M2199.4 190.8 V213 a14.6 5.6 0 0 0 29.2 0 V190.8 M2199.4 198.2 a14.6 5.6 0 0 0 29.2 0 M2199.4 205.6 a14.6 5.6 0 0 0 29.2 0" stroke="#ced0d6" stroke-width="3" fill="none" stroke-linecap="round" stroke-linejoin="round" />
<path d="M122 111.8 a15.3 9.7 0 1 0 0 19.4 a15.3 9.7 0 1 0 0 -19.4 Z M124.1 115.8 a11.1 6.4 0 1 1 0 12.8 a11.1 6.4 0 1 1 0 -12.8 Z" fill="#6e7780" fill-rule="evenodd"/>
<text transform="translate(117.9 134.1) scale(1.1 1)" font-family="Liberation Sans,sans-serif" font-weight="700" font-size="21.4" fill="#5394b8" stroke="#1e1f22" stroke-width="3.4">R</text>
<text transform="translate(117.9 134.1) scale(1.1 1)" font-family="Liberation Sans,sans-serif" font-weight="700" font-size="21.4" fill="#5394b8" stroke="#5394b8" stroke-width="1.0">R</text>
<path d="M360 112h28v24h-28zM362 118v4h6v-4zM362 124v4h6v-4zM362 130v4h6v-4zM370 118v4h8v-4zM370 124v4h8v-4zM370 130v4h8v-4zM380 118v4h6v-4zM380 124v4h6v-4zM380 130v4h6v-4z" fill="#9aa7b0" fill-rule="evenodd"/>
<path d="M526 112h28v24h-28zM528 118v4h6v-4zM528 124v4h6v-4zM528 130v4h6v-4zM536 118v4h8v-4zM536 124v4h8v-4zM536 130v4h8v-4zM546 118v4h6v-4zM546 124v4h6v-4zM546 130v4h6v-4z" fill="#848f97" fill-rule="evenodd"/>
<path d="M463.5 117.3 L477 130.8 M477 117.3 L463.5 130.8" stroke="#7a7e85" stroke-width="2" fill="none" stroke-linecap="round" stroke-linejoin="round" />
<circle cx="1210" cy="112.2" r="2.2" fill="#dfe1e5"/>
<circle cx="1210" cy="122" r="2.2" fill="#dfe1e5"/>
<circle cx="1210" cy="132" r="2.2" fill="#dfe1e5"/>
<g transform="translate(0 0)"><path d="M104.2 187.6 V204.1 a2 2 0 0 0 2 2 H122.6" stroke="#ced0d6" stroke-width="2" fill="none" stroke-linecap="round"/><path d="M112.8 197.4 L124 186.2 M116.9 186.2 H124.1 V193.4" stroke="#ced0d6" stroke-width="2" fill="none" stroke-linecap="round" stroke-linejoin="round"/></g>
<circle cx="166.1" cy="193.9" r="9.2" stroke="#ced0d6" stroke-width="2" fill="none"/>
<path d="M172.8 200.6 L179.3 207.3" stroke="#ced0d6" stroke-width="2" fill="none" stroke-linecap="round" stroke-linejoin="round" />
<rect x="208" y="182" width="28" height="4" rx="0" fill="#b4b4b4"/>
<rect x="208" y="206" width="28" height="4" rx="0" fill="#b4b4b4"/>
<path d="M210 196.1 L218 190 V202.2 Z M233.9 196.1 L226 190 V202.2 Z" fill="#b4b4b4" />
<path d="M264.7 197 A11.25 11.25 0 0 1 283 187.2 M260.6 194.6 L264.7 199 L269.4 194.6" stroke="#ced0d6" stroke-width="2" fill="none" stroke-linecap="round" stroke-linejoin="round" />
<path d="M287.2 195.2 A11.25 11.25 0 0 1 269 205 M282.8 197.8 L287.2 193.2 L291.4 197.8" stroke="#ced0d6" stroke-width="2" fill="none" stroke-linecap="round" stroke-linejoin="round" />
<rect x="1425.9" y="114" width="4" height="20" rx="0" fill="#b0b1b4"/>
<rect x="1432" y="118" width="4" height="16" rx="0" fill="#b0b1b4"/>
<rect x="1438" y="124" width="4" height="10" rx="0" fill="#b0b1b4"/>
<rect x="1444" y="118" width="4" height="16" rx="0" fill="#b0b1b4"/>
<rect x="1573" y="113" width="18" height="20" rx="4" stroke="#7d8085" stroke-width="2" fill="none"/>
<path d="M1578.4 118.9 H1585.6 M1578.4 122.9 H1585.6 M1578.4 126.9 H1585.6" stroke="#7d8085" stroke-width="2" fill="none" stroke-linecap="round" stroke-linejoin="round" />
<path d="M1578 109.4 H1590.6 a4 4 0 0 1 4 4 V128" stroke="#7d8085" stroke-width="2" fill="none" stroke-linecap="round" stroke-linejoin="round" />
<path d="M1846 112h22v22h-22zM1850 116v4h2v-4z M1850 122.6v7.4h2v-7.4zM1856 116v4h2v-4z M1856 122.6v7.4h2v-7.4zM1862 116v4h2v-4z M1862 122.6v7.4h2v-7.4z" fill="#6e7076" fill-rule="evenodd"/>
<path d="M1279 196 H1301.5 M1287.5 187.5 L1279 196 L1287.5 204.5" stroke="#646465" stroke-width="2" fill="none" stroke-linecap="round" stroke-linejoin="round" />
<path d="M1331 196 H1353.5 M1345 187.5 L1353.5 196 L1345 204.5" stroke="#646465" stroke-width="2" fill="none" stroke-linecap="round" stroke-linejoin="round" />
<g transform="translate(1294 0)"><path d="M104.2 187.6 V204.1 a2 2 0 0 0 2 2 H122.6" stroke="#ced0d6" stroke-width="2" fill="none" stroke-linecap="round"/><path d="M112.8 197.4 L124 186.2 M116.9 186.2 H124.1 V193.4" stroke="#ced0d6" stroke-width="2" fill="none" stroke-linecap="round" stroke-linejoin="round"/></g>
<g transform="translate(0 0)"><rect x="1449" y="187" width="18" height="20" rx="4" stroke="#ced0d6" stroke-width="2" fill="none"/><path d="M1454.4 193.3 H1461.8 M1454.4 197.3 H1461.8 M1454.4 201.3 H1461.8" stroke="#ced0d6" stroke-width="2" fill="none"/><path d="M1454.5 183.6 H1466.8 a4 4 0 0 1 4 4 V201.5" stroke="#ced0d6" stroke-width="2" fill="none" stroke-linecap="round"/></g>
<path d="M1508.2 182h17.6v19.7h-17.6z M1512 186.6h10.1v1.9h-10.1z M1512 190.5h10.1v1.9h-10.1z M1512 194.4h10.1v1.9h-10.1z" fill="#b0b1b4" fill-rule="evenodd"/>
<circle cx="1507.5" cy="197.6" r="7.9" stroke="#2b2d30" stroke-width="7.5" fill="#2b2d30"/>
<path d="M1513 203.4 L1518.8 208.8" stroke="#2b2d30" stroke-width="7" fill="none" stroke-linecap="round" stroke-linejoin="round" />
<circle cx="1507.5" cy="197.6" r="7.9" stroke="#b0b1b4" stroke-width="3.6" fill="none"/>
<path d="M1513.2 203.6 L1518.6 208.6" stroke="#b0b1b4" stroke-width="4" stroke-linecap="butt"/>
<g transform="translate(0 0)"><rect x="1552.7" y="188.1" width="22.6" height="2.6" rx="1" stroke="#ced0d6" stroke-width="2" fill="none"/><path d="M1559.3 187.6 a4.9 4.9 0 0 1 9.8 0" stroke="#ced0d6" stroke-width="2" fill="none"/><path d="M1555.4 191.5 L1556.7 206 a3 3 0 0 0 3 3 H1568.7 a3 3 0 0 0 3 -3 L1573 191.5" stroke="#ced0d6" stroke-width="2" fill="none" stroke-linejoin="round"/><path d="M1561 194.5 V203.5 M1567.3 194.5 V203.5" stroke="#ced0d6" stroke-width="2" fill="none"/></g>
<path d="M1619.2 185.5 L1640.8 206.5 M1640.8 185.5 L1619.2 206.5" stroke="#ced0d6" stroke-width="2" fill="none" stroke-linecap="round" stroke-linejoin="round" />
<path d="M1706.20 196.00 L1706.21 196.27 L1706.22 196.54 L1706.25 196.81 L1706.29 197.09 L1706.34 197.38 L1706.41 197.66 L1706.50 197.96 L1706.60 198.28 L1706.75 198.61 L1707.15 199.02 L1707.54 199.45 L1707.65 199.82 L1707.71 200.18 L1707.72 200.54 L1707.69 200.89 L1707.64 201.23 L1707.56 201.56 L1707.45 201.89 L1707.32 202.20 L1707.16 202.50 L1706.98 202.79 L1706.77 203.06 L1706.55 203.32 L1706.30 203.55 L1706.03 203.77 L1705.74 203.97 L1705.42 204.13 L1705.08 204.27 L1704.70 204.35 L1704.14 204.24 L1703.58 204.10 L1703.22 204.13 L1702.90 204.19 L1702.60 204.27 L1702.31 204.36 L1702.04 204.45 L1701.78 204.56 L1701.53 204.67 L1701.29 204.79 L1701.05 204.92 L1700.82 205.06 L1700.59 205.21 L1700.37 205.37 L1700.15 205.55 L1699.93 205.73 L1699.71 205.94 L1699.50 206.16 L1699.28 206.41 L1699.07 206.70 L1698.92 207.25 L1698.73 207.80 L1698.47 208.09 L1698.18 208.31 L1697.88 208.50 L1697.57 208.66 L1697.24 208.78 L1696.91 208.88 L1696.58 208.95 L1696.24 208.99 L1695.90 209.00 L1695.56 208.99 L1695.22 208.95 L1694.89 208.88 L1694.56 208.78 L1694.23 208.66 L1693.92 208.50 L1693.62 208.31 L1693.33 208.09 L1693.07 207.80 L1692.88 207.25 L1692.73 206.70 L1692.52 206.41 L1692.30 206.16 L1692.09 205.94 L1691.87 205.73 L1691.65 205.55 L1691.43 205.37 L1691.21 205.21 L1690.98 205.06 L1690.75 204.92 L1690.51 204.79 L1690.27 204.67 L1690.02 204.56 L1689.76 204.45 L1689.49 204.36 L1689.20 204.27 L1688.90 204.19 L1688.58 204.13 L1688.22 204.10 L1687.66 204.24 L1687.10 204.35 L1686.72 204.27 L1686.38 204.13 L1686.06 203.97 L1685.77 203.77 L1685.50 203.55 L1685.25 203.32 L1685.03 203.06 L1684.82 202.79 L1684.64 202.50 L1684.48 202.20 L1684.35 201.89 L1684.24 201.56 L1684.16 201.23 L1684.11 200.89 L1684.08 200.54 L1684.09 200.18 L1684.15 199.82 L1684.26 199.45 L1684.65 199.02 L1685.05 198.61 L1685.20 198.28 L1685.30 197.96 L1685.39 197.66 L1685.46 197.38 L1685.51 197.09 L1685.55 196.81 L1685.58 196.54 L1685.59 196.27 L1685.60 196.00 L1685.59 195.73 L1685.58 195.46 L1685.55 195.19 L1685.51 194.91 L1685.46 194.62 L1685.39 194.34 L1685.30 194.04 L1685.20 193.72 L1685.05 193.39 L1684.65 192.98 L1684.26 192.55 L1684.15 192.18 L1684.09 191.82 L1684.08 191.46 L1684.11 191.11 L1684.16 190.77 L1684.24 190.44 L1684.35 190.11 L1684.48 189.80 L1684.64 189.50 L1684.82 189.21 L1685.03 188.94 L1685.25 188.68 L1685.50 188.45 L1685.77 188.23 L1686.06 188.03 L1686.38 187.87 L1686.72 187.73 L1687.10 187.65 L1687.66 187.76 L1688.22 187.90 L1688.58 187.87 L1688.90 187.81 L1689.20 187.73 L1689.49 187.64 L1689.76 187.55 L1690.02 187.44 L1690.27 187.33 L1690.51 187.21 L1690.75 187.08 L1690.98 186.94 L1691.21 186.79 L1691.43 186.63 L1691.65 186.45 L1691.87 186.27 L1692.09 186.06 L1692.30 185.84 L1692.52 185.59 L1692.73 185.30 L1692.88 184.75 L1693.07 184.20 L1693.33 183.91 L1693.62 183.69 L1693.92 183.50 L1694.23 183.34 L1694.56 183.22 L1694.89 183.12 L1695.22 183.05 L1695.56 183.01 L1695.90 183.00 L1696.24 183.01 L1696.58 183.05 L1696.91 183.12 L1697.24 183.22 L1697.57 183.34 L1697.88 183.50 L1698.18 183.69 L1698.47 183.91 L1698.73 184.20 L1698.92 184.75 L1699.07 185.30 L1699.28 185.59 L1699.50 185.84 L1699.71 186.06 L1699.93 186.27 L1700.15 186.45 L1700.37 186.63 L1700.59 186.79 L1700.82 186.94 L1701.05 187.08 L1701.29 187.21 L1701.53 187.33 L1701.78 187.44 L1702.04 187.55 L1702.31 187.64 L1702.60 187.73 L1702.90 187.81 L1703.22 187.87 L1703.58 187.90 L1704.14 187.76 L1704.70 187.65 L1705.08 187.73 L1705.42 187.87 L1705.74 188.03 L1706.03 188.23 L1706.30 188.45 L1706.55 188.68 L1706.77 188.94 L1706.98 189.21 L1707.16 189.50 L1707.32 189.80 L1707.45 190.11 L1707.56 190.44 L1707.64 190.77 L1707.69 191.11 L1707.72 191.46 L1707.71 191.82 L1707.65 192.18 L1707.54 192.55 L1707.15 192.98 L1706.75 193.39 L1706.60 193.72 L1706.50 194.04 L1706.41 194.34 L1706.34 194.62 L1706.29 194.91 L1706.25 195.19 L1706.22 195.46 L1706.21 195.73 Z" stroke="#ced0d6" stroke-width="2" fill="none" stroke-linecap="round" stroke-linejoin="round" />
<circle cx="1695.9" cy="196" r="4.4" stroke="#ced0d6" stroke-width="2" fill="none"/>
<path d="M1810.6 192 H1829.3 L1820 201.9 Z" fill="#9da0a8" />
<path d="M1869.4 197.4 L1873.4 201.8 L1882.4 188.8" stroke="#fff" stroke-width="3.4" fill="none" stroke-linecap="round" stroke-linejoin="round" />
<path d="M235 859.6 L249 873 M249 859.6 L235 873" stroke="#868a91" stroke-width="2" fill="none" stroke-linecap="round" stroke-linejoin="round" />
<path d="M103.8 935.6 V956.4 a1.2 1.2 0 0 0 1.8 1 L124.6 947 a1.2 1.2 0 0 0 0 -2 L105.6 934.6 a1.2 1.2 0 0 0 -1.8 1 Z" stroke="#5fad65" stroke-width="2" fill="#253627" stroke-linecap="round" stroke-linejoin="round" />
<circle cx="114" cy="997.7" r="13" stroke="#ced0d6" stroke-width="2" fill="none"/>
<path d="M113.4 991.6 V998.4 L119.3 1001.5" stroke="#ced0d6" stroke-width="2" fill="none" stroke-linecap="round" stroke-linejoin="round" />
<path d="M102 1038 H111.6 L114.5 1041.8 H126 V1057.7 H102 Z" fill="#5a5a5c" />
<path d="M116.5 1046.5 L125 1055 L117.5 1062.5" stroke="#2b2d30" stroke-width="7" fill="none" stroke-linecap="round" stroke-linejoin="round" />
<path d="M116.5 1046.5 L125 1055 L117.5 1062.5" stroke="#5a5a5c" stroke-width="3.4" fill="none" stroke-linecap="butt" stroke-linejoin="miter"/>
<path d="M124 1097.3 A10.9 10.9 0 1 0 124.4 1105.8 M124.9 1088.6 V1097.3 H115.5" stroke="#ced0d6" stroke-width="2" fill="none" stroke-linecap="round" stroke-linejoin="round" />
<path d="M100 1158.9 H128 M100 1168 H123.2 a4.5 4.5 0 0 1 0 9 H114.6 M119.4 1172.6 L114.6 1177 L119.4 1181.4 M100 1177 H109.8" stroke="#ced0d6" stroke-width="2" fill="none" stroke-linecap="round" stroke-linejoin="round" />
<path d="M107.5 1213.2 a6.4 6.4 0 0 1 12.8 .3 c0 3.6 -3 5 -5.2 7 c-1.4 1.3 -1.8 2.4 -1.8 4" stroke="#ced0d6" stroke-width="2.4" fill="none" stroke-linecap="round" stroke-linejoin="round" />
<circle cx="113.5" cy="1232.4" r="2" fill="#ced0d6"/>
<path d="M1184.2 945 H1209.8 M1197 932.2 V957.8" stroke="#646465" stroke-width="2" fill="none" stroke-linecap="round" stroke-linejoin="round" />
<path d="M1198 987.6 V1005.8 M1190.2 994.8 L1198 987.2 L1205.8 994.8 M1186.2 1009 H1209.8" stroke="#646465" stroke-width="2" fill="none" stroke-linecap="round" stroke-linejoin="round" />
<path d="M1186.2 1038.9 H1209.8 M1198 1042.4 V1060.4 M1190.2 1053 L1198 1060.6 L1205.8 1053" stroke="#646465" stroke-width="2" fill="none" stroke-linecap="round" stroke-linejoin="round" />
<g transform="translate(-262 906)"><rect x="1449" y="187" width="18" height="20" rx="4" stroke="#646465" stroke-width="2" fill="none"/><path d="M1454.4 193.3 H1461.8 M1454.4 197.3 H1461.8 M1454.4 201.3 H1461.8" stroke="#646465" stroke-width="2" fill="none"/><path d="M1454.5 183.6 H1466.8 a4 4 0 0 1 4 4 V201.5" stroke="#646465" stroke-width="2" fill="none" stroke-linecap="round"/></g>
<g transform="translate(-366 972)"><rect x="1552.7" y="188.1" width="22.6" height="2.6" rx="1" stroke="#ced0d6" stroke-width="2" fill="none"/><path d="M1559.3 187.6 a4.9 4.9 0 0 1 9.8 0" stroke="#ced0d6" stroke-width="2" fill="none"/><path d="M1555.4 191.5 L1556.7 206 a3 3 0 0 0 3 3 H1568.7 a3 3 0 0 0 3 -3 L1573 191.5" stroke="#ced0d6" stroke-width="2" fill="none" stroke-linejoin="round"/><path d="M1561 194.5 V203.5 M1567.3 194.5 V203.5" stroke="#ced0d6" stroke-width="2" fill="none"/></g>
<path d="M1183 1220 C1187 1212.5 1192.5 1209.8 1198 1209.8 S1209 1212.5 1213 1220 C1209 1227.5 1203.5 1230.2 1198 1230.2 S1187 1227.5 1183 1220 Z" stroke="#ced0d6" stroke-width="2" fill="none" stroke-linecap="round" stroke-linejoin="round" />
<circle cx="1198" cy="1220" r="5.1" stroke="#ced0d6" stroke-width="2" fill="none"/>
<path d="M1208.2 1238 H1216 V1230.2 Z" fill="#ced0d6" />
<rect x="1187" y="1261" width="22" height="22" rx="3.5" stroke="#ced0d6" stroke-width="2" fill="none"/>
<rect x="1191.4" y="1264.8" width="13.2" height="3.4" rx="1" stroke="#ced0d6" stroke-width="1.8" fill="none"/>
<circle cx="1191.9" cy="1273.5" r="1.4" fill="#ced0d6"/>
<circle cx="1191.9" cy="1278.6" r="1.4" fill="#ced0d6"/>
<circle cx="1198" cy="1273.5" r="1.4" fill="#ced0d6"/>
<circle cx="1198" cy="1278.6" r="1.4" fill="#ced0d6"/>
<circle cx="1204.1" cy="1273.5" r="1.4" fill="#ced0d6"/>
<circle cx="1204.1" cy="1278.6" r="1.4" fill="#ced0d6"/>
<path d="M1188 1315.4 V1332.5 a2 2 0 0 0 2 2 H1206.8 M1208.4 1313.6 L1197.4 1324.6 M1197.3 1316.8 V1324.7 H1205.3" stroke="#ced0d6" stroke-width="2" fill="none" stroke-linecap="round" stroke-linejoin="round" />
<path d="M1208.2 1341.8 H1216 V1334 Z" fill="#ced0d6" />
<path d="M1267.6 932.3 L1275.6 940.3 L1267.6 948.3" stroke="#b4b8bf" stroke-width="2" fill="none" stroke-linecap="round" stroke-linejoin="round" />
<path d="M1267.6 980.3 L1275.6 988.3 L1267.6 996.3" stroke="#b4b8bf" stroke-width="2" fill="none" stroke-linecap="round" stroke-linejoin="round" />
<path d="M1267.6 1028.3 L1275.6 1036.3 L1267.6 1044.3" stroke="#b4b8bf" stroke-width="2" fill="none" stroke-linecap="round" stroke-linejoin="round" />
<path d="M1267.6 1076.3 L1275.6 1084.3 L1267.6 1092.3" stroke="#b4b8bf" stroke-width="2" fill="none" stroke-linecap="round" stroke-linejoin="round" />
<path d="M1267.6 1124.3 L1275.6 1132.3 L1267.6 1140.3" stroke="#b4b8bf" stroke-width="2" fill="none" stroke-linecap="round" stroke-linejoin="round" />
<path d="M1300 1024h28v24h-28zM1302 1030v4h6v-4zM1302 1036v4h6v-4zM1302 1042v4h6v-4zM1310 1030v4h8v-4zM1310 1036v4h8v-4zM1310 1042v4h8v-4zM1320 1030v4h6v-4zM1320 1036v4h6v-4zM1320 1042v4h6v-4z" fill="#9aa7b0" fill-rule="evenodd"/>
<rect x="1302" y="1072" width="24" height="24" rx="0" fill="#48829c"/>
<text x="1304.2" y="1090" font-family="Liberation Sans,sans-serif" font-weight="700" font-size="15.5" fill="#1d3b48" textLength="19.6" lengthAdjust="spacingAndGlyphs">01</text>
<rect x="1302" y="1120" width="24" height="24" rx="0" fill="#48829c"/>
<text x="1304.2" y="1138" font-family="Liberation Sans,sans-serif" font-weight="700" font-size="15.5" fill="#1d3b48" textLength="19.6" lengthAdjust="spacingAndGlyphs">01</text>
<path d="M30 1498h28v24h-28zM32 1504v4h6v-4zM32 1510v4h6v-4zM32 1516v4h6v-4zM40 1504v4h8v-4zM40 1510v4h8v-4zM40 1516v4h8v-4zM50 1504v4h6v-4zM50 1510v4h6v-4zM50 1516v4h6v-4z" fill="#9aa7b0" fill-rule="evenodd"/></svg>
</div></div></body></html>
